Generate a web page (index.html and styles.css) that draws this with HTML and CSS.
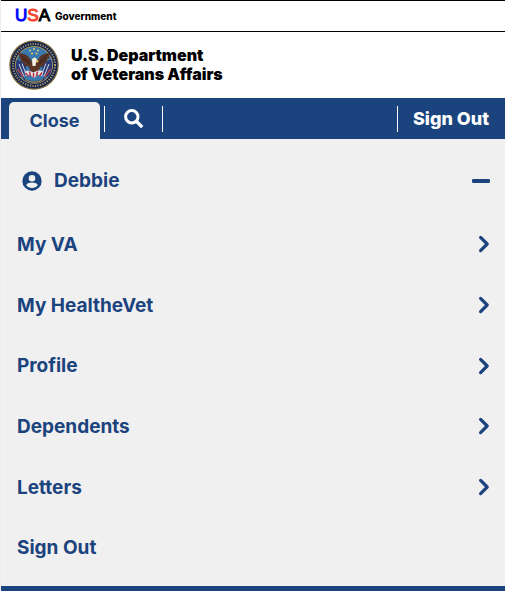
FILE: index.html
```html
<!DOCTYPE html>
<html lang="en">
<head>
<meta charset="utf-8">
<meta name="viewport" content="width=device-width, initial-scale=1">
<title>U.S. Department of Veterans Affairs</title>
<link rel="stylesheet" href="styles.css">
</head>
<body>
<div class="gov-bar"><span class="usa"><span class="usa-u">U</span><span class="usa-s">S</span>A</span><span class="gov">Government</span></div>
<header class="brand">
  <svg class="seal" viewBox="0 0 100 100" aria-hidden="true">
    <circle cx="50" cy="50" r="49.5" fill="#7d6b3c"/>
    <circle cx="50" cy="50" r="47" fill="#16234e"/>
    <circle cx="50" cy="50" r="42" fill="none" stroke="#a39a70" stroke-width="4" stroke-dasharray="2.5 2.6"/>
    <circle cx="50" cy="50" r="37" fill="#3a79ad" stroke="#b39c58" stroke-width="2"/>
    <path d="M16 39l19 9-4 22-9 4C13 63 12 50 16 39zM84 39l-19 9 4 22 9 4c9-11 10-24 6-35z" fill="#283b78"/>
    <path d="M20 48l10 25M26 47l8 21M80 48L70 73M74 47l-8 21" stroke="#d6d4de" stroke-width="2"/>
    <path d="M17 58l12 17M83 58L71 75" stroke="#a9404b" stroke-width="3"/>
    <g fill="#e8cc68"><circle cx="50" cy="18" r="2"/><circle cx="42" cy="21" r="2"/><circle cx="58" cy="21" r="2"/><circle cx="46" cy="27" r="2"/><circle cx="55" cy="27" r="2"/></g>
    <path d="M46 45C42 33 32 25 17 27l5 6-4 1 7 6-3 2 9 5-1 4 9 2 4 9 9 5 8-8 4-6 6-2-1-4 9-4-3-3 8-6-4-1 5-6c-15-2-23 5-28 17z" fill="#5b3526"/>
    <path d="M23 30l19 14M26 37l16 11M77 30L60 44M75 37L60 48" stroke="#35201c" stroke-width="2"/>
    <path d="M46 39c2-5 8-5 10 0l2 5-4 1-1 7h-6z" fill="#f2eee4"/>
    <path d="M54 39l7 4-6 1z" fill="#e2b244"/>
    <path d="M31 64c7-5 12-2 18 1 6-4 13-6 20-1l-3 8-9-2-7 6-8-6-8 2z" fill="#e8e0e3"/>
    <path d="M33 66l6 6M41 63l2 9M49 66v9M57 63l-2 9M66 65l-5 7" stroke="#b63043" stroke-width="3"/>
    <path d="M27 73c12 12 34 12 46 0l-3 7c-11 9-29 9-40 0z" fill="#22365e"/>
    <path d="M33 79c9 7 25 7 34 0" fill="none" stroke="#c2a856" stroke-width="2"/>
  </svg>
  <div class="brand-name">U.S. Department<br>of Veterans Affairs</div>
</header>
<nav class="toolbar" aria-label="Main">
  <button class="close" type="button">Close</button>
  <button class="search" type="button" aria-label="Search">
    <svg viewBox="0 0 20 20" aria-hidden="true"><circle cx="7.8" cy="7.7" r="6.2" fill="none" stroke="#fff" stroke-width="3"/><path d="M12.2 12.1l6 6" stroke="#fff" stroke-width="3.4"/></svg>
  </button>
  <a class="sign-out" href="#">Sign Out</a>
</nav>
<main class="panel">
  <button class="user" type="button" aria-expanded="true">
    <svg class="avatar" viewBox="0 0 20 20" aria-hidden="true"><circle cx="10" cy="10" r="9.7" fill="#1b437e"/><circle cx="10" cy="7.2" r="3.3" fill="#f0f0f0"/><path d="M4.2 14.1c1.2-1.8 3.3-2.5 5.8-2.5s4.6.7 5.8 2.5c-1.2 2-3.3 3-5.8 3s-4.6-1-5.8-3z" fill="#f0f0f0"/></svg>
    <span>Debbie</span>
    <svg class="minus" viewBox="0 0 18 4" aria-hidden="true"><rect width="18" height="4" rx="1.3" fill="#1b437e"/></svg>
  </button>
  <ul class="menu">
    <li><a href="#">My VA<svg class="chevron" viewBox="0 0 12 18" aria-hidden="true"><path d="M2.6 2.4L9.2 9l-6.6 6.600"/></svg></a></li>
    <li><a href="#">My HealtheVet<svg class="chevron" viewBox="0 0 12 18" aria-hidden="true"><path d="M2.6 2.4L9.2 9l-6.6 6.600"/></svg></a></li>
    <li><a href="#">Profile<svg class="chevron" viewBox="0 0 12 18" aria-hidden="true"><path d="M2.6 2.4L9.2 9l-6.6 6.600"/></svg></a></li>
    <li><a href="#">Dependents<svg class="chevron" viewBox="0 0 12 18" aria-hidden="true"><path d="M2.6 2.4L9.2 9l-6.6 6.600"/></svg></a></li>
    <li><a href="#">Letters<svg class="chevron" viewBox="0 0 12 18" aria-hidden="true"><path d="M2.6 2.4L9.2 9l-6.6 6.600"/></svg></a></li>
    <li><a href="#">Sign Out</a></li>
  </ul>
</main>
</body>
</html>
```
FILE: styles.css
```css
* { box-sizing: border-box; }
body {
  margin: 0;
  min-height: 100vh;
  display: flex;
  flex-direction: column;
  border-left: 1px solid #efebf5;
  background: #fff;
  color: #000;
  font-family: Inter, "Liberation Sans", sans-serif;
  font-weight: 700;
}
a { color: inherit; text-decoration: none; }
button { border: 0; padding: 0; background: none; color: inherit; font: inherit; cursor: pointer; }
svg { display: block; flex: none; }

.gov-bar {
  display: flex;
  align-items: center;
  gap: 5px;
  height: 32px;
  padding-left: 14px;
  border-top: 1px solid #000;
  border-bottom: 1px solid #000;
}
.usa { font-family: "Liberation Sans", sans-serif; font-size: 17px; font-weight: 400; -webkit-text-stroke: 1px; }
.usa-u { color: #00f; }
.usa-s { color: #f5442f; }
.gov { font-size: 10px; font-weight: 800; }

.brand { display: flex; align-items: center; gap: 12px; height: 66px; padding-left: 8px; }
.seal { width: 50px; height: 50px; }
.brand-name { font-size: 16px; line-height: 19px; font-weight: 900; }

.toolbar { display: flex; align-items: center; height: 41px; padding: 0 16px 0 8px; background: #1b437e; color: #fff; }
.close {
  align-self: flex-end;
  width: 91px;
  height: 37px;
  border-radius: 5px 5px 0 0;
  background: #f0f0f0;
  color: #1b437e;
  font-size: 18px;
}
.search {
  display: flex;
  align-items: center;
  justify-content: center;
  width: 59px;
  height: 26px;
  margin-left: 4px;
  border: solid #fff;
  border-width: 0 1px;
}
.search svg { width: 20px; height: 20px; }
.sign-out { margin-left: auto; padding-left: 15px; border-left: 1px solid #fff; font-size: 18px; font-weight: 800; line-height: 26px; }

.panel {
  flex: 1;
  display: flex;
  flex-direction: column;
  padding-bottom: 8px;
  background: #f0f0f0;
  border-bottom: 5px solid #1b437e;
  color: #1b437e;
  font-size: 19px;
}
.user { display: flex; align-items: center; gap: 12px; height: 83px; margin-bottom: -8px; padding: 0 15px 0 21px; }
.avatar { width: 20px; height: 20px; }
.minus { width: 18px; height: 4px; margin-left: auto; }
.menu { flex: 1; display: flex; flex-direction: column; margin: 0; padding: 0; list-style: none; }
.menu li { flex: 1; display: flex; min-height: 48px; }
.menu a { flex: 1; display: flex; align-items: center; justify-content: space-between; padding: 0 15px 0 16px; }
.chevron { width: 12px; height: 18px; fill: none; stroke: #1b437e; stroke-width: 3.2; stroke-linejoin: round; stroke-linecap: round; }
```
